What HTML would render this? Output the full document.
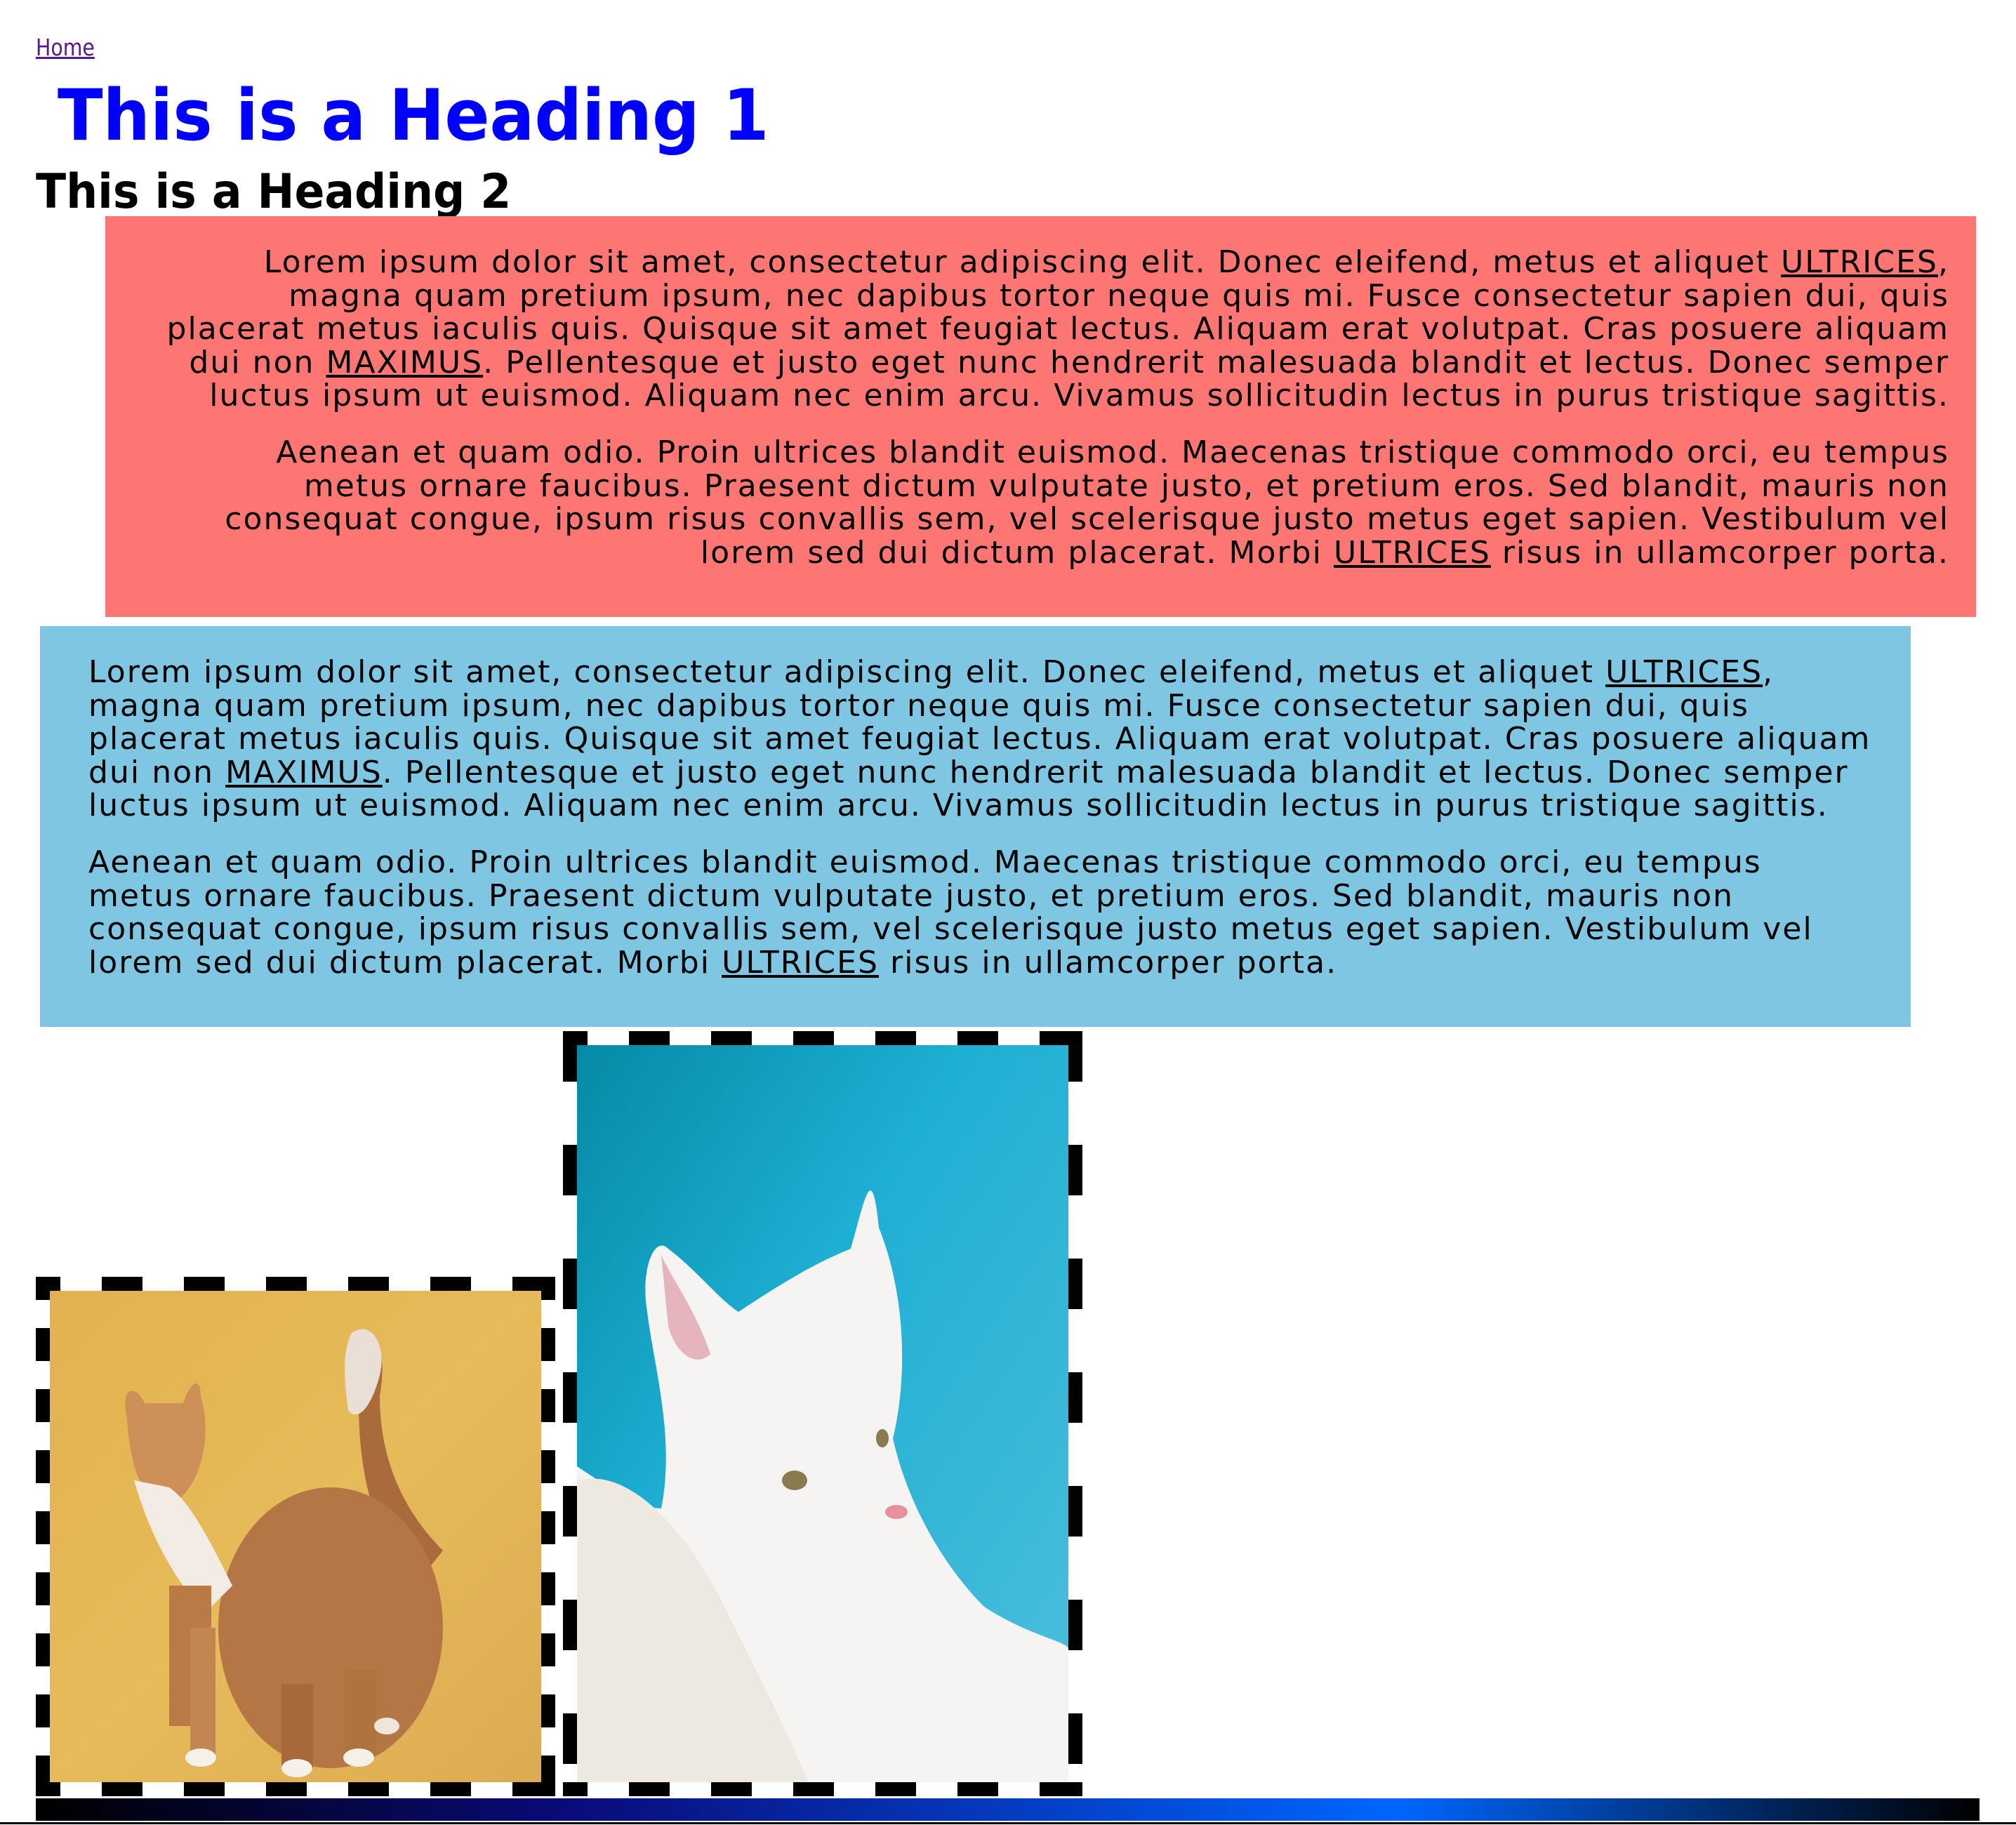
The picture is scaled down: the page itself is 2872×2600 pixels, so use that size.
<!DOCTYPE html>
<html><head><meta charset="utf-8"><style>
html,body{margin:0;padding:0;background:#fff;width:2872px;height:2600px;overflow:hidden;position:relative;font-family:"DejaVu Sans","Liberation Sans",sans-serif}
.a{position:absolute}
#home{left:51px;top:51px;font-size:33px;line-height:1;color:#551a8b;text-decoration:underline;white-space:nowrap;transform:scaleX(.86);transform-origin:0 0}
#h1{left:82px;top:114px;font-size:101px;line-height:1;font-weight:bold;color:#0000ff;margin:0;white-space:nowrap;transform:scaleX(.937);transform-origin:0 0}
#h2{left:51px;top:240px;font-size:68px;line-height:1;font-weight:bold;color:#000;margin:0;white-space:nowrap;transform:scaleX(.93);transform-origin:0 0}
.box{box-sizing:border-box;font-size:44px;line-height:47.6px;color:#000;white-space:nowrap;letter-spacing:2.05px}
.box p{margin:0}
.box p+p{margin-top:33px}
#red{left:150px;top:308px;width:2665px;height:571px;background:#fd7674;text-align:right;padding:42px 38px 0 0}
#blue{left:57px;top:892px;width:2665px;height:571px;background:#7ec6e2;text-align:left;padding:42px 0 0 69px}
u{text-decoration:underline}
.fr{background:#fff}
.e{position:absolute;background-color:transparent}
.t,.b{left:0;right:0;height:20px;background-image:repeating-linear-gradient(90deg,#000 0 58px,transparent 58px 117px);background-position:-23px 0}
.t{top:0}.b{bottom:0}
.l,.r{top:0;bottom:0;width:20px}
.l{left:0}.r{right:0}
#f1 .l,#f1 .r{background-image:repeating-linear-gradient(180deg,#000 0 47px,transparent 47px 87px);background-position:0 -14px}
#f2 .l,#f2 .r{background-image:repeating-linear-gradient(180deg,#000 0 72px,transparent 72px 162px);background-position:0 0}
.im{position:absolute;left:20px;top:20px}
#f1{left:51px;top:1819px;width:740px;height:740px}
#f2{left:802px;top:1469px;width:740px;height:1090px}
#foot{left:51px;top:2562px;width:2769px;height:32px;background:linear-gradient(90deg,#000 0%,#0a0a78 27%,#0066ff 70%,#000 100%);font-size:22px;color:#000;line-height:32px;padding-left:10px;box-sizing:border-box}
#line{left:0;top:2596px;width:2872px;height:3px;background:#000}
</style></head><body>
<a id="home" class="a">Home</a>
<h1 id="h1" class="a">This is a Heading 1</h1>
<h2 id="h2" class="a">This is a Heading 2</h2>
<div id="red" class="a box">
<p>Lorem ipsum dolor sit amet, consectetur adipiscing elit. Donec eleifend, metus et aliquet <u>ULTRICES</u>,<br>magna quam pretium ipsum, nec dapibus tortor neque quis mi. Fusce consectetur sapien dui, quis<br>placerat metus iaculis quis. Quisque sit amet feugiat lectus. Aliquam erat volutpat. Cras posuere aliquam<br>dui non <u>MAXIMUS</u>. Pellentesque et justo eget nunc hendrerit malesuada blandit et lectus. Donec semper<br>luctus ipsum ut euismod. Aliquam nec enim arcu. Vivamus sollicitudin lectus in purus tristique sagittis.</p>
<p>Aenean et quam odio. Proin ultrices blandit euismod. Maecenas tristique commodo orci, eu tempus<br>metus ornare faucibus. Praesent dictum vulputate justo, et pretium eros. Sed blandit, mauris non<br>consequat congue, ipsum risus convallis sem, vel scelerisque justo metus eget sapien. Vestibulum vel<br>lorem sed dui dictum placerat. Morbi <u>ULTRICES</u> risus in ullamcorper porta.</p>
</div>
<div id="blue" class="a box">
<p>Lorem ipsum dolor sit amet, consectetur adipiscing elit. Donec eleifend, metus et aliquet <u>ULTRICES</u>,<br>magna quam pretium ipsum, nec dapibus tortor neque quis mi. Fusce consectetur sapien dui, quis<br>placerat metus iaculis quis. Quisque sit amet feugiat lectus. Aliquam erat volutpat. Cras posuere aliquam<br>dui non <u>MAXIMUS</u>. Pellentesque et justo eget nunc hendrerit malesuada blandit et lectus. Donec semper<br>luctus ipsum ut euismod. Aliquam nec enim arcu. Vivamus sollicitudin lectus in purus tristique sagittis.</p>
<p>Aenean et quam odio. Proin ultrices blandit euismod. Maecenas tristique commodo orci, eu tempus<br>metus ornare faucibus. Praesent dictum vulputate justo, et pretium eros. Sed blandit, mauris non<br>consequat congue, ipsum risus convallis sem, vel scelerisque justo metus eget sapien. Vestibulum vel<br>lorem sed dui dictum placerat. Morbi <u>ULTRICES</u> risus in ullamcorper porta.</p>
</div>
<div id="f1" class="a fr"><div class="e t"></div><div class="e b"></div><div class="e l"></div><div class="e r"></div>
<svg class="im" width="700" height="700" viewBox="0 0 700 700">
<defs><linearGradient id="gy" x1="0" y1="0" x2="1" y2="1"><stop offset="0" stop-color="#e2b24f"/><stop offset=".5" stop-color="#e6bb59"/><stop offset="1" stop-color="#dcab52"/></linearGradient></defs>
<rect width="700" height="700" fill="url(#gy)"/>
<path d="M430 70 C470 50 480 90 470 150 C470 260 520 330 560 370 L520 420 C470 360 440 280 440 160 Z" fill="#a96a3c"/>
<path d="M430 60 C460 40 480 80 470 120 C460 160 440 190 425 170 C420 130 415 90 430 60 Z" fill="#e9dfd4"/>
<ellipse cx="400" cy="480" rx="160" ry="200" fill="#b57645"/>
<path d="M110 180 C100 140 120 130 135 160 L190 160 C200 130 215 120 215 150 C230 200 220 270 180 300 C140 310 115 270 110 180 Z" fill="#cc9058"/>
<path d="M120 270 C140 340 170 400 220 460 L260 420 C230 360 200 300 170 280 Z" fill="#f3ece4"/>
<rect x="170" y="420" width="60" height="200" fill="#b97a45"/><rect x="200" y="480" width="36" height="190" fill="#c48650"/>
<rect x="330" y="560" width="45" height="120" fill="#a86a3a"/><rect x="420" y="540" width="45" height="120" fill="#b07340"/>
<ellipse cx="215" cy="665" rx="22" ry="13" fill="#f5f0ea"/><ellipse cx="352" cy="680" rx="22" ry="13" fill="#f5f0ea"/><ellipse cx="440" cy="665" rx="22" ry="13" fill="#f5f0ea"/><ellipse cx="480" cy="620" rx="18" ry="12" fill="#eee6dc"/>
</svg></div>
<div id="f2" class="a fr"><div class="e t"></div><div class="e b"></div><div class="e l"></div><div class="e r"></div>
<svg class="im" width="700" height="1050" viewBox="0 0 700 1050">
<defs><linearGradient id="gb" x1="0" y1="0" x2="1" y2="1"><stop offset="0" stop-color="#058aa6"/><stop offset=".4" stop-color="#1eafd4"/><stop offset="1" stop-color="#4fbfdc"/></linearGradient></defs>
<rect width="700" height="1050" fill="url(#gb)"/>
<path d="M100 380 C90 320 110 270 130 290 C170 320 200 360 230 380 C290 340 340 310 390 290 C410 220 420 160 430 260 C470 360 470 480 450 560 C470 650 520 740 580 800 C640 840 700 850 700 860 L700 1050 L0 1050 L0 600 C60 640 90 660 120 660 C140 560 110 460 100 380 Z" fill="#f6f4f2"/>
<path d="M0 620 C80 600 160 700 210 800 C260 900 300 980 330 1050 L0 1050 Z" fill="#ede8e2"/>
<path d="M120 300 C140 340 170 380 190 440 C170 460 140 440 130 400 Z" fill="#e6b4bc"/>
<ellipse cx="310" cy="620" rx="18" ry="14" fill="#8a7a50"/><ellipse cx="435" cy="560" rx="9" ry="13" fill="#8a7a50"/>
<ellipse cx="455" cy="665" rx="16" ry="10" fill="#e8909c"/>
</svg></div>
<div id="foot" class="a">© 2022</div>
<div id="line" class="a"></div>
</body></html>
